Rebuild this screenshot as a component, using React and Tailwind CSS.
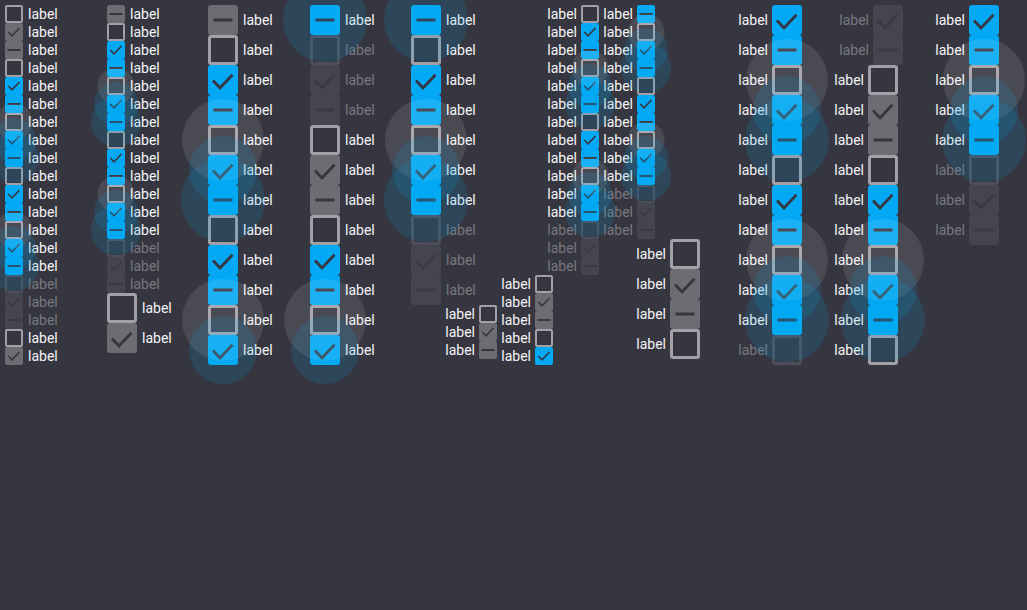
import React from 'react';

// states: u = unchecked, cg/pg = checked/partial grey, cb/pb = checked/partial blue,
// du/dc/dp = disabled. a trailing * means the item shows its hover halo.
const colA = ['u', 'cg', 'pg', 'u', 'cb', 'pb', 'u*', 'cb*', 'pb*', 'u', 'cb', 'pb', 'u*', 'cb*', 'pb*', 'du', 'dc', 'dp', 'u', 'cg'];
const colB = ['pg', 'u', 'cb', 'pb', 'u*', 'cb*', 'pb*', 'u', 'cb', 'pb', 'u*', 'cb*', 'pb*', 'du', 'dc', 'dp'];
const colC = ['pg', 'u', 'cb', 'pb', 'u*', 'cb*', 'pb*', 'u', 'cb', 'pb', 'u*', 'cb*'];
const colD = ['pb*', 'du', 'dc', 'dp', 'u', 'cg', 'pg', 'u', 'cb', 'pb', 'u*', 'cb*'];
const colE = ['pb*', 'u', 'cb', 'pb', 'u*', 'cb*', 'pb*', 'du', 'dc', 'dp'];
const colH = ['u', 'cb', 'pb', 'u*', 'cb*', 'pb*', 'u', 'cb', 'pb', 'u*', 'cb*', 'pb*', 'du', 'dc', 'dp'];
const colI = ['pb', 'u*', 'cb*', 'pb*', 'u', 'cb', 'pb', 'u*', 'cb*', 'pb*', 'du', 'dc', 'dp'];
const colK = ['cb', 'pb', 'u*', 'cb*', 'pb*', 'u', 'cb', 'pb', 'u*', 'cb*', 'pb*', 'du'];
const colL = ['u', 'cg', 'pg', 'u', 'cb', 'pb', 'u*', 'cb*', 'pb*', 'u'];
const colM = ['cb', 'pb', 'u*', 'cb*', 'pb*', 'du', 'dc', 'dp'];

const INK = '#363640';

function Halo({ state, big }) {
  const base = state.replace('*', '');
  if (base === 'u') {
    return big
      ? <span className="pointer-events-none absolute left-1/2 top-1/2 z-10 h-[82px] w-[82px] -translate-x-1/2 -translate-y-1/2 rounded-full bg-[rgba(255,255,255,0.1)]" />
      : <span className="pointer-events-none absolute left-1/2 top-1/2 z-10 h-[37px] w-[37px] -translate-x-1/2 -translate-y-1/2 rounded-full bg-[rgba(255,255,255,0.1)]" />;
  }
  if (base === 'cb') {
    return big
      ? <span className="pointer-events-none absolute left-1/2 top-1/2 z-10 h-[68px] w-[68px] -translate-x-1/2 -translate-y-1/2 rounded-full bg-[rgba(3,169,244,0.14)]" />
      : <span className="pointer-events-none absolute left-1/2 top-1/2 z-10 h-[44px] w-[44px] -translate-x-1/2 -translate-y-1/2 rounded-full bg-[rgba(3,169,244,0.14)]" />;
  }
  return big
    ? <span className="pointer-events-none absolute left-1/2 top-1/2 z-10 h-[84px] w-[84px] -translate-x-1/2 -translate-y-1/2 rounded-full bg-[rgba(3,169,244,0.14)]" />
    : <span className="pointer-events-none absolute left-1/2 top-1/2 z-10 h-[50px] w-[50px] -translate-x-1/2 -translate-y-1/2 rounded-full bg-[rgba(3,169,244,0.14)]" />;
}

function Mark({ kind, big, disabled }) {
  const color = disabled ? '#3a3a44' : INK;
  if (big) {
    return (
      <svg viewBox="0 0 30 30" className="absolute inset-0 h-full w-full">
        {kind === 'c'
          ? <path d="M5 15.5 L12 23 L24.5 9.7" fill="none" stroke={color} strokeWidth="2.8" />
          : <rect x="5.5" y="13.5" width="19" height="3" fill={color} />}
      </svg>
    );
  }
  return (
    <svg viewBox="0 0 18 18" className="absolute inset-0 h-full w-full">
      {kind === 'c'
        ? <path d="M3.3 9 L7 12.8 L14.5 5" fill="none" stroke={color} strokeWidth="1.6" />
        : <rect x="2.5" y="8" width="13" height="2" fill={color} />}
    </svg>
  );
}

function Box({ state, big }) {
  const base = state.replace('*', '');
  const hover = state.endsWith('*');
  let cls = big ? 'relative h-[30px] w-[30px] shrink-0 rounded-[3px] ' : 'relative h-[18px] w-[18px] shrink-0 rounded-[2px] ';
  if (base === 'u') cls += big ? 'border-[3px] border-[#a0a0a6]' : 'border-2 border-[#a0a0a6]';
  else if (base === 'du') cls += big ? 'border-[3px] border-[#4d4e5a]' : 'border-2 border-[#4d4e5a]';
  else if (base === 'cg' || base === 'pg') cls += 'bg-[#6c6c73]';
  else if (base === 'cb' || base === 'pb') cls += 'bg-[#03a9f4]';
  else cls += 'bg-[#45454f]';

  let mark = null;
  if (base.startsWith('c') || base === 'dc') mark = <Mark kind="c" big={big} disabled={base === 'dc'} />;
  if (base.startsWith('p') || base === 'dp') mark = <Mark kind="p" big={big} disabled={base === 'dp'} />;

  return (
    <span className={cls}>
      {mark}
      {hover && <Halo state={state} big={big} />}
    </span>
  );
}

function Label({ state }) {
  const off = state.startsWith('d');
  return <span className={off ? 'text-[14px] leading-none text-[#78787f]' : 'text-[14px] leading-none text-[#f4f4f6]'}>label</span>;
}

function RightRows({ items, big }) {
  return items.map((s, i) => (
    <div key={i} className={big ? 'flex h-[30px] items-center' : 'flex h-[18px] items-center'}>
      <Box state={s} big={big} />
      <span className="ml-[5px]"><Label state={s} /></span>
    </div>
  ));
}

function LeftRows({ items, big, width }) {
  return (
    <div className={width}>
      {items.map((s, i) => (
        <div key={i} className={big ? 'flex h-[30px] items-center justify-end' : 'flex h-[18px] items-center justify-end'}>
          <span className="mr-[4px]"><Label state={s} /></span>
          <Box state={s} big={big} />
        </div>
      ))}
    </div>
  );
}

export default function App() {
  return (
    <div className="min-h-screen h-[610px] w-full overflow-hidden bg-[#363640] [font-family:Roboto,'Liberation_Sans',sans-serif]">
      <div className="flex items-start pl-[5px] pt-[5px]">
        <div className="flex w-[102px] shrink-0 flex-col">
          <RightRows items={colA} />
        </div>
        <div className="flex w-[101px] shrink-0 flex-col">
          <RightRows items={colB} />
          <RightRows items={['u', 'cg']} big />
        </div>
        <div className="flex w-[102px] shrink-0 flex-col">
          <RightRows items={colC} big />
        </div>
        <div className="flex w-[101px] shrink-0 flex-col">
          <RightRows items={colD} big />
        </div>
        <div className="flex w-[84px] shrink-0 flex-col">
          <RightRows items={colE} big />
          <LeftRows items={['u', 'cg', 'pg']} width="w-[86px]" />
        </div>
        <div className="flex w-[102px] shrink-0 flex-col">
          <LeftRows items={colH} width="w-[104px]" />
          <LeftRows items={['u', 'cg', 'pg', 'u', 'cb']} width="w-[58px]" />
        </div>
        <div className="flex w-[137px] shrink-0 flex-col">
          <LeftRows items={colI} width="w-[58px]" />
          <LeftRows items={['u', 'cg', 'pg', 'u']} big width="w-[103px]" />
        </div>
        <div className="flex w-[96px] shrink-0 flex-col">
          <LeftRows items={colK} big width="w-[68px]" />
        </div>
        <div className="flex w-[101px] shrink-0 flex-col">
          <LeftRows items={['dc', 'dp']} big width="w-[73px]" />
          <LeftRows items={colL} big width="w-[68px]" />
        </div>
        <div className="flex w-[90px] shrink-0 flex-col">
          <LeftRows items={colM} big width="w-[68px]" />
        </div>
      </div>
    </div>
  );
}
